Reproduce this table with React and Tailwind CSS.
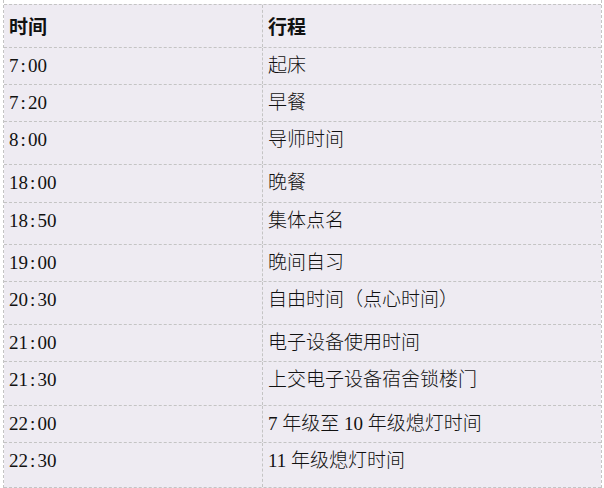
import React from "react";

const rows = [
  ["7:00", "起床", "h-[37px]"],
  ["7:20", "早餐", "h-[37px]"],
  ["8:00", "导师时间", "h-[43px]"],
  ["18:00", "晚餐", "h-[38px]"],
  ["18:50", "集体点名", "h-[42px]"],
  ["19:00", "晚间自习", "h-[37px]"],
  ["20:30", "自由时间（点心时间）", "h-[43px]"],
  ["21:00", "电子设备使用时间", "h-[37px]"],
  ["21:30", "上交电子设备宿舍锁楼门", "h-[44px]"],
  ["22:00", "7 年级至 10 年级熄灯时间", "h-[37px]"],
  ["22:30", "11 年级熄灯时间", "h-[44px]"],
];

function Time({ t }) {
  const [a, b] = t.split(":");
  return (
    <span>
      {a}
      <span className="inline-block w-[0.5em] text-center">:</span>
      {b}
    </span>
  );
}

export default function App() {
  return (
    <div className="w-[604px] h-[488px] bg-white overflow-hidden pl-[3px]">
      <div className="w-[599px] h-[488px] border-x border-dashed border-[#c4c4c4] pt-[4px]">
        <div
          className="border-t border-dashed border-[#c4c4c4] bg-[#eeebf2] text-[19px] text-[#111]"
          style={{ fontFamily: '"Liberation Serif", "Noto Sans CJK SC", serif' }}
        >
          <div className="grid grid-cols-[259px_1fr] h-[43px] border-b border-dashed border-[#c4c4c4] font-bold">
            <div className="border-r border-dashed border-[#c4c4c4] pl-[5px] pt-[13px] leading-[20px]">时间</div>
            <div className="pl-[5px] pt-[13px] leading-[20px]">行程</div>
          </div>
          {rows.map(([t, e, h], i) => (
            <div
              key={i}
              className={`grid grid-cols-[259px_1fr] ${h} ${i < rows.length - 1 ? "border-b border-dashed border-[#c4c4c4]" : ""}`}
            >
              <div className="border-r border-dashed border-[#c4c4c4] pl-[5px] pt-[8px] leading-[20px]">
                <Time t={t} />
              </div>
              <div className="pl-[5px] pt-[8px] leading-[20px] font-light">{e}</div>
            </div>
          ))}
          <div className="border-b border-dashed border-[#c4c4c4]"></div>
        </div>
      </div>
    </div>
  );
}
